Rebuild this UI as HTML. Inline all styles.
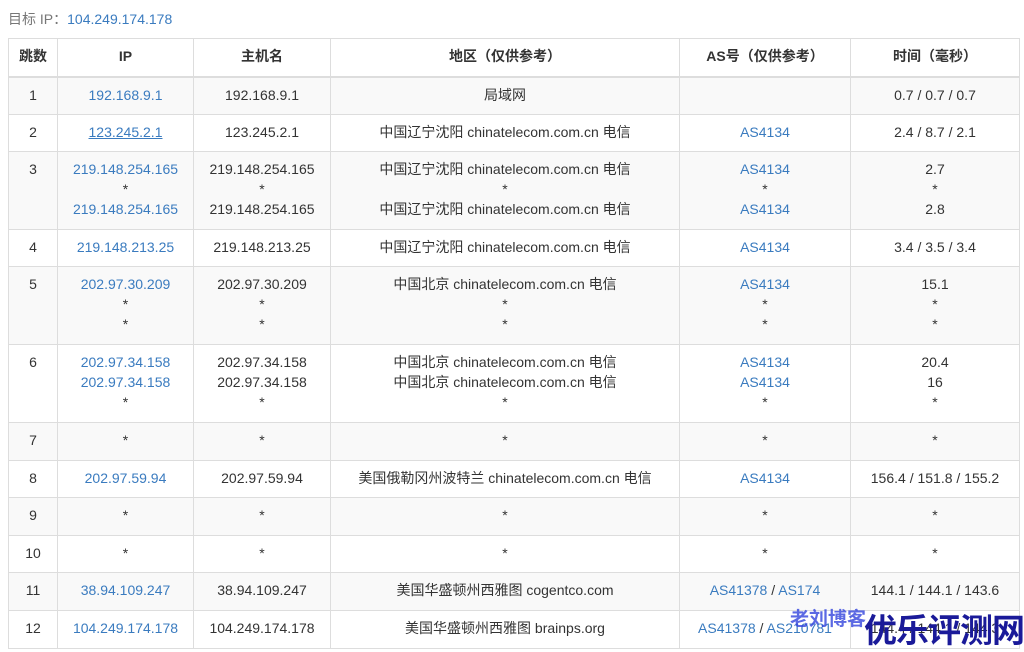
<!DOCTYPE html>
<html><head><meta charset="utf-8"><style>
body{margin:0;background:#fff;width:1024px;height:652px;overflow:hidden;font-family:"Liberation Sans","Noto Sans CJK SC",sans-serif;font-size:14px;color:#333;position:relative}
.t{position:absolute;left:8px;top:8px;color:#777;font-size:14px;line-height:22px}
.t span{color:#3a7bbf}
table{position:absolute;left:8px;top:38px;border-collapse:collapse;table-layout:fixed;width:1011px}
td,th{border:1px solid #ddd;text-align:center;vertical-align:top;padding:7px 4px 0;line-height:20px;white-space:nowrap;overflow:hidden}
th{font-weight:bold;border-bottom:2px solid #ddd;padding-top:7px;color:#333}
tr.o td{background:#f9f9f9}
a{color:#3a7bbf;text-decoration:none}
a.u{text-decoration:underline}
.w1{position:absolute;left:790px;top:604px;color:#3344dd;font-size:19px;font-weight:bold;opacity:.8}
.w2{position:absolute;left:864px;top:604px;color:#1a1a99;font-size:33px;font-weight:bold;letter-spacing:-1px}
</style></head><body>
<div class="t">目标 IP：<span>104.249.174.178</span></div>
<table>
<colgroup><col style="width:49px"><col style="width:136px"><col style="width:137px"><col style="width:349px"><col style="width:171px"><col style="width:169px"></colgroup>
<tr style="height:38px"><th>跳数</th><th>IP</th><th>主机名</th><th>地区（仅供参考）</th><th>AS号（仅供参考）</th><th>时间（毫秒）</th></tr>
<tr class="o" style="height:38px"><td>1</td><td><a>192.168.9.1</a></td><td>192.168.9.1</td><td>局域网</td><td></td><td>0.7 / 0.7 / 0.7</td></tr>
<tr style="height:37px"><td>2</td><td><a class="u">123.245.2.1</a></td><td>123.245.2.1</td><td>中国辽宁沈阳 chinatelecom.com.cn 电信</td><td><a>AS4134</a></td><td>2.4 / 8.7 / 2.1</td></tr>
<tr class="o" style="height:78px"><td>3</td><td><a>219.148.254.165</a><br>*<br><a>219.148.254.165</a></td><td>219.148.254.165<br>*<br>219.148.254.165</td><td>中国辽宁沈阳 chinatelecom.com.cn 电信<br>*<br>中国辽宁沈阳 chinatelecom.com.cn 电信</td><td><a>AS4134</a><br>*<br><a>AS4134</a></td><td>2.7<br>*<br>2.8</td></tr>
<tr style="height:37px"><td>4</td><td><a>219.148.213.25</a></td><td>219.148.213.25</td><td>中国辽宁沈阳 chinatelecom.com.cn 电信</td><td><a>AS4134</a></td><td>3.4 / 3.5 / 3.4</td></tr>
<tr class="o" style="height:78px"><td>5</td><td><a>202.97.30.209</a><br>*<br>*</td><td>202.97.30.209<br>*<br>*</td><td>中国北京 chinatelecom.com.cn 电信<br>*<br>*</td><td><a>AS4134</a><br>*<br>*</td><td>15.1<br>*<br>*</td></tr>
<tr style="height:78px"><td>6</td><td><a>202.97.34.158</a><br><a>202.97.34.158</a><br>*</td><td>202.97.34.158<br>202.97.34.158<br>*</td><td>中国北京 chinatelecom.com.cn 电信<br>中国北京 chinatelecom.com.cn 电信<br>*</td><td><a>AS4134</a><br><a>AS4134</a><br>*</td><td>20.4<br>16<br>*</td></tr>
<tr class="o" style="height:38px"><td>7</td><td>*</td><td>*</td><td>*</td><td>*</td><td>*</td></tr>
<tr style="height:37px"><td>8</td><td><a>202.97.59.94</a></td><td>202.97.59.94</td><td>美国俄勒冈州波特兰 chinatelecom.com.cn 电信</td><td><a>AS4134</a></td><td>156.4 / 151.8 / 155.2</td></tr>
<tr class="o" style="height:38px"><td>9</td><td>*</td><td>*</td><td>*</td><td>*</td><td>*</td></tr>
<tr style="height:37px"><td>10</td><td>*</td><td>*</td><td>*</td><td>*</td><td>*</td></tr>
<tr class="o" style="height:38px"><td>11</td><td><a>38.94.109.247</a></td><td>38.94.109.247</td><td>美国华盛顿州西雅图 cogentco.com</td><td><a>AS41378</a> / <a>AS174</a></td><td>144.1 / 144.1 / 143.6</td></tr>
<tr style="height:38px"><td>12</td><td><a>104.249.174.178</a></td><td>104.249.174.178</td><td>美国华盛顿州西雅图 brainps.org</td><td><a>AS41378</a> / <a>AS210781</a></td><td>144.4 / 144.1 / 144.3</td></tr>
</table>
<div class="w1">老刘博客</div>
<div class="w2">优乐评测网</div>
</body></html>
